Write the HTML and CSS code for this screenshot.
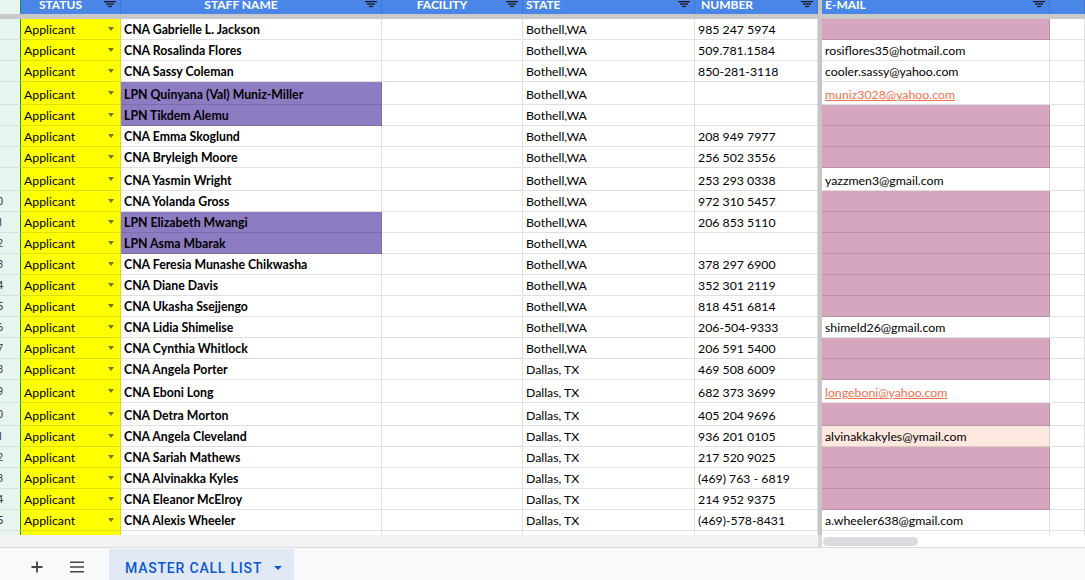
FILE: index.html
```html
<!DOCTYPE html>
<html>
<head>
<meta charset="utf-8">
<link rel="stylesheet" href="styles.css">
</head>
<body>
<div class="sheet">
  <div class="row hdr">
    <div class="rh"></div>
    <div class="h ctr"><span class="t">STATUS</span><svg class="fi" viewBox="0 0 12 8"><rect x="0" y="1" width="12" height="1.3"/><rect x="2" y="3.4" width="8" height="1.3"/><rect x="4" y="5.8" width="4" height="1.3"/></svg></div>
    <div class="h ctr"><span class="t">STAFF NAME</span><svg class="fi" viewBox="0 0 12 8"><rect x="0" y="1" width="12" height="1.3"/><rect x="2" y="3.4" width="8" height="1.3"/><rect x="4" y="5.8" width="4" height="1.3"/></svg></div>
    <div class="h ctr"><span class="t">FACILITY</span><svg class="fi" viewBox="0 0 12 8"><rect x="0" y="1" width="12" height="1.3"/><rect x="2" y="3.4" width="8" height="1.3"/><rect x="4" y="5.8" width="4" height="1.3"/></svg></div>
    <div class="h"><span class="t">STATE</span><svg class="fi" viewBox="0 0 12 8"><rect x="0" y="1" width="12" height="1.3"/><rect x="2" y="3.4" width="8" height="1.3"/><rect x="4" y="5.8" width="4" height="1.3"/></svg></div>
    <div class="h"><span class="t wide">NUMBER</span><svg class="fi" viewBox="0 0 12 8"><rect x="0" y="1" width="12" height="1.3"/><rect x="2" y="3.4" width="8" height="1.3"/><rect x="4" y="5.8" width="4" height="1.3"/></svg></div>
    <div class="fz"></div>
    <div class="h"><span class="t">E-MAIL</span><svg class="fi" viewBox="0 0 12 8"><rect x="0" y="1" width="12" height="1.3"/><rect x="2" y="3.4" width="8" height="1.3"/><rect x="4" y="5.8" width="4" height="1.3"/></svg></div>
    <div class="h"></div>
  </div>
  <div class="band"></div>

  <div class="row"><div class="rh"><span>2</span></div><div class="c st">Applicant<i class="dd"></i></div><div class="c nm">CNA Gabrielle L. Jackson</div><div class="c"></div><div class="c">Bothell,WA</div><div class="c">985 247 5974</div><div class="fz"></div><div class="c pink"></div><div class="c"></div></div>
  <div class="row"><div class="rh"><span>3</span></div><div class="c st">Applicant<i class="dd"></i></div><div class="c nm">CNA Rosalinda Flores</div><div class="c"></div><div class="c">Bothell,WA</div><div class="c">509.781.1584</div><div class="fz"></div><div class="c">rosiflores35@hotmail.com</div><div class="c"></div></div>
  <div class="row"><div class="rh"><span>4</span></div><div class="c st">Applicant<i class="dd"></i></div><div class="c nm">CNA Sassy Coleman</div><div class="c"></div><div class="c">Bothell,WA</div><div class="c">850-281-3118</div><div class="fz"></div><div class="c">cooler.sassy@yahoo.com</div><div class="c"></div></div>
  <div class="row tall"><div class="rh"><span>5</span></div><div class="c st">Applicant<i class="dd"></i></div><div class="c nm lpn">LPN Quinyana (Val) Muniz-Miller</div><div class="c"></div><div class="c">Bothell,WA</div><div class="c"></div><div class="fz"></div><div class="c"><span class="lnk">muniz3028@yahoo.com</span></div><div class="c"></div></div>
  <div class="row"><div class="rh"><span>6</span></div><div class="c st">Applicant<i class="dd"></i></div><div class="c nm lpn">LPN Tikdem Alemu</div><div class="c"></div><div class="c">Bothell,WA</div><div class="c"></div><div class="fz"></div><div class="c pink"></div><div class="c"></div></div>
  <div class="row"><div class="rh"><span>7</span></div><div class="c st">Applicant<i class="dd"></i></div><div class="c nm">CNA Emma Skoglund</div><div class="c"></div><div class="c">Bothell,WA</div><div class="c">208 949 7977</div><div class="fz"></div><div class="c pink"></div><div class="c"></div></div>
  <div class="row"><div class="rh"><span>8</span></div><div class="c st">Applicant<i class="dd"></i></div><div class="c nm">CNA Bryleigh Moore</div><div class="c"></div><div class="c">Bothell,WA</div><div class="c">256 502 3556</div><div class="fz"></div><div class="c pink"></div><div class="c"></div></div>
  <div class="row tall"><div class="rh"><span>9</span></div><div class="c st">Applicant<i class="dd"></i></div><div class="c nm">CNA Yasmin Wright</div><div class="c"></div><div class="c">Bothell,WA</div><div class="c">253 293 0338</div><div class="fz"></div><div class="c">yazzmen3@gmail.com</div><div class="c"></div></div>
  <div class="row"><div class="rh"><span>10</span></div><div class="c st">Applicant<i class="dd"></i></div><div class="c nm">CNA Yolanda Gross</div><div class="c"></div><div class="c">Bothell,WA</div><div class="c">972 310 5457</div><div class="fz"></div><div class="c pink"></div><div class="c"></div></div>
  <div class="row"><div class="rh"><span>11</span></div><div class="c st">Applicant<i class="dd"></i></div><div class="c nm lpn">LPN Elizabeth Mwangi</div><div class="c"></div><div class="c">Bothell,WA</div><div class="c">206 853 5110</div><div class="fz"></div><div class="c pink"></div><div class="c"></div></div>
  <div class="row"><div class="rh"><span>12</span></div><div class="c st">Applicant<i class="dd"></i></div><div class="c nm lpn">LPN Asma Mbarak</div><div class="c"></div><div class="c">Bothell,WA</div><div class="c"></div><div class="fz"></div><div class="c pink"></div><div class="c"></div></div>
  <div class="row"><div class="rh"><span>13</span></div><div class="c st">Applicant<i class="dd"></i></div><div class="c nm">CNA Feresia Munashe Chikwasha</div><div class="c"></div><div class="c">Bothell,WA</div><div class="c">378 297 6900</div><div class="fz"></div><div class="c pink"></div><div class="c"></div></div>
  <div class="row"><div class="rh"><span>14</span></div><div class="c st">Applicant<i class="dd"></i></div><div class="c nm">CNA Diane Davis</div><div class="c"></div><div class="c">Bothell,WA</div><div class="c">352 301 2119</div><div class="fz"></div><div class="c pink"></div><div class="c"></div></div>
  <div class="row"><div class="rh"><span>15</span></div><div class="c st">Applicant<i class="dd"></i></div><div class="c nm">CNA Ukasha Ssejjengo</div><div class="c"></div><div class="c">Bothell,WA</div><div class="c">818 451 6814</div><div class="fz"></div><div class="c pink"></div><div class="c"></div></div>
  <div class="row"><div class="rh"><span>16</span></div><div class="c st">Applicant<i class="dd"></i></div><div class="c nm">CNA Lidia Shimelise</div><div class="c"></div><div class="c">Bothell,WA</div><div class="c">206-504-9333</div><div class="fz"></div><div class="c">shimeld26@gmail.com</div><div class="c"></div></div>
  <div class="row"><div class="rh"><span>17</span></div><div class="c st">Applicant<i class="dd"></i></div><div class="c nm">CNA Cynthia Whitlock</div><div class="c"></div><div class="c">Bothell,WA</div><div class="c">206 591 5400</div><div class="fz"></div><div class="c pink"></div><div class="c"></div></div>
  <div class="row"><div class="rh"><span>18</span></div><div class="c st">Applicant<i class="dd"></i></div><div class="c nm">CNA Angela Porter</div><div class="c"></div><div class="c">Dallas, TX</div><div class="c">469 508 6009</div><div class="fz"></div><div class="c pink"></div><div class="c"></div></div>
  <div class="row tall"><div class="rh"><span>19</span></div><div class="c st">Applicant<i class="dd"></i></div><div class="c nm">CNA Eboni Long</div><div class="c"></div><div class="c">Dallas, TX</div><div class="c">682 373 3699</div><div class="fz"></div><div class="c"><span class="lnk">longeboni@yahoo.com</span></div><div class="c"></div></div>
  <div class="row tall"><div class="rh"><span>20</span></div><div class="c st">Applicant<i class="dd"></i></div><div class="c nm">CNA Detra Morton</div><div class="c"></div><div class="c">Dallas, TX</div><div class="c">405 204 9696</div><div class="fz"></div><div class="c pink"></div><div class="c"></div></div>
  <div class="row"><div class="rh"><span>21</span></div><div class="c st">Applicant<i class="dd"></i></div><div class="c nm">CNA Angela Cleveland</div><div class="c"></div><div class="c">Dallas, TX</div><div class="c">936 201 0105</div><div class="fz"></div><div class="c peach">alvinakkakyles@ymail.com</div><div class="c"></div></div>
  <div class="row"><div class="rh"><span>22</span></div><div class="c st">Applicant<i class="dd"></i></div><div class="c nm">CNA Sariah Mathews</div><div class="c"></div><div class="c">Dallas, TX</div><div class="c">217 520 9025</div><div class="fz"></div><div class="c pink"></div><div class="c"></div></div>
  <div class="row"><div class="rh"><span>23</span></div><div class="c st">Applicant<i class="dd"></i></div><div class="c nm">CNA Alvinakka Kyles</div><div class="c"></div><div class="c">Dallas, TX</div><div class="c">(469) 763 - 6819</div><div class="fz"></div><div class="c pink"></div><div class="c"></div></div>
  <div class="row"><div class="rh"><span>24</span></div><div class="c st">Applicant<i class="dd"></i></div><div class="c nm">CNA Eleanor McElroy</div><div class="c"></div><div class="c">Dallas, TX</div><div class="c">214 952 9375</div><div class="fz"></div><div class="c pink"></div><div class="c"></div></div>
  <div class="row"><div class="rh"><span>25</span></div><div class="c st">Applicant<i class="dd"></i></div><div class="c nm">CNA Alexis Wheeler</div><div class="c"></div><div class="c">Dallas, TX</div><div class="c">(469)-578-8431</div><div class="fz"></div><div class="c">a.wheeler638@gmail.com</div><div class="c"></div></div>
  <div class="row"><div class="rh"><span>26</span></div><div class="c st"></div><div class="c"></div><div class="c"></div><div class="c"></div><div class="c"></div><div class="fz"></div><div class="c"></div><div class="c"></div></div>
</div>

<div class="hscroll">
  <div class="hs-frozen"></div>
  <div class="hs-bar"></div>
  <div class="hs-track"><div class="thumb"></div></div>
</div>

<div class="tabbar">
  <div class="tb-btn">
    <svg width="14" height="14" viewBox="0 0 14 14"><path d="M7 1.5v11M1.5 7h11" stroke="#444746" stroke-width="1.8" fill="none"/></svg>
  </div>
  <div class="tb-btn menu">
    <svg width="16" height="12" viewBox="0 0 16 12"><path d="M1 1.2h14M1 6h14M1 10.8h14" stroke="#444746" stroke-width="1.6" fill="none"/></svg>
  </div>
  <div class="tab">
    <span class="tab-name">MASTER CALL LIST</span>
    <i class="tab-dd"></i>
  </div>
</div>
</body>
</html>
```

FILE: styles.css
```css
* { box-sizing: border-box; }

body {
  margin: 0;
  width: 1085px;
  height: 580px;
  overflow: hidden;
  display: flex;
  flex-direction: column;
  background: #ffffff;
  font-family: Lato, "Liberation Sans", sans-serif;
  color: #000;
}

.sheet {
  height: 535px;
  overflow: hidden;
  flex: none;
}

.row {
  display: grid;
  grid-template-columns: 21px 100px 261px 141px 172px 123px 4px 228px 1fr;
  height: 21px;
}

.row.tall { height: 23px; }

.row.hdr { height: 14px; background: #4a86e8; }

.band { height: 5px; background: #c9c9c9; }

.rh {
  background: #e8f5ee;
  border-right: 1px solid #1e8e3e;
  border-bottom: 1px solid rgba(0, 0, 0, 0.08);
  overflow: hidden;
  display: flex;
  align-items: center;
  font-family: Roboto, "Liberation Sans", sans-serif;
  font-size: 11px;
  color: #3c4043;
}

.hdr .rh { border-bottom: none; }

.rh span {
  display: block;
  flex: none;
  width: 46px;
  margin-left: -26px;
  text-align: center;
}

.h {
  display: flex;
  align-items: flex-start;
  border-right: 1px solid rgba(0, 0, 0, 0.12);
  color: #fff;
  font-weight: 700;
  font-size: 12px;
  line-height: 9px;
  white-space: nowrap;
  overflow: hidden;
}

.h .t { flex: 1; padding-left: 3px; }
.h .t.wide { padding-left: 6px; }
.h.ctr .t { text-align: center; padding-left: 0; }

.h .fi {
  flex: none;
  width: 12px;
  height: 8px;
  margin: 0 4px;
  fill: #1b1b1b;
}

.fz { background: #c6c6c6; }

.c {
  display: flex;
  align-items: flex-end;
  padding: 0 3px 2px;
  border-right: 1px solid rgba(0, 0, 0, 0.12);
  border-bottom: 1px solid rgba(0, 0, 0, 0.12);
  font-size: 12.3px;
  line-height: 14px;
  white-space: nowrap;
  overflow: hidden;
}

.c.st {
  background: #ffff00;
  justify-content: space-between;
}

.dd {
  align-self: center;
  width: 0;
  height: 0;
  margin-right: 3px;
  margin-top: 1px;
  border-left: 3.5px solid transparent;
  border-right: 3.5px solid transparent;
  border-top: 4px solid rgba(0, 0, 0, 0.55);
}

.c.nm { font-weight: 700; }
.c.lpn { background: #8e7cc3; }
.c.pink { background: #d5a6bd; }
.c.peach { background: #fde8df; }

.lnk {
  color: #f1714d;
  text-decoration: underline;
}

.hscroll {
  height: 13px;
  flex: none;
  display: grid;
  grid-template-columns: 818px 4px 1fr;
  border-bottom: 1px solid #dadce0;
}

.hs-frozen { background: #f3f3f3; }
.hs-bar { background: #d9dadc; }
.hs-track { background: #fff; padding: 2px 0 0 1px; }

.thumb {
  width: 95px;
  height: 9px;
  border-radius: 5px;
  background: #dadce0;
}

.tabbar {
  flex: 1;
  display: flex;
  align-items: stretch;
  background: #f8f9fa;
  padding-left: 25px;
}

.tb-btn {
  width: 24px;
  display: flex;
  align-items: center;
  justify-content: center;
  padding-top: 6px;
}

.tb-btn.menu { margin-left: 16px; }

.tab {
  margin-left: 20px;
  margin-top: 1px;
  width: 185px;
  background: #e1e9f7;
  display: flex;
  align-items: center;
  padding: 7px 0 0 16px;
}

.tab-name {
  font-family: Roboto, "Liberation Sans", sans-serif;
  font-weight: 500;
  font-size: 14px;
  letter-spacing: 0.8px;
  color: #0b57d0;
}

.tab-dd {
  margin-left: 12px;
  width: 0;
  height: 0;
  border-left: 4px solid transparent;
  border-right: 4px solid transparent;
  border-top: 4px solid #0b57d0;
}
```
